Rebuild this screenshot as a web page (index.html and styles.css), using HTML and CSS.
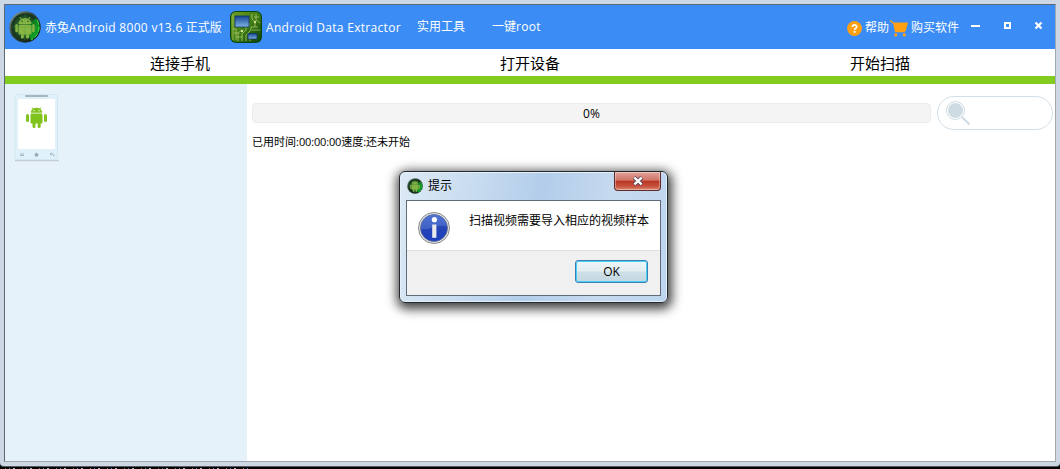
FILE: index.html
```
<!DOCTYPE html>
<html lang="zh-CN">
<head>
    <meta charset="UTF-8">
    <title>赤兔Android 8000</title>
    <link rel="stylesheet" href="styles.css">
</head>
<body>
    <svg width="0" height="0" class="defs">
        <defs>
            <radialGradient id="radar" cx="50%" cy="50%" r="55%">
                <stop offset="0" stop-color="#4b8a35"/>
                <stop offset="0.6" stop-color="#24532a"/>
                <stop offset="1" stop-color="#0d2413"/>
            </radialGradient>
            <linearGradient id="sweep" x1="0" y1="0" x2="1" y2="1">
                <stop offset="0" stop-color="#0c5a14"/>
                <stop offset="1" stop-color="#12b52f"/>
            </linearGradient>
            <linearGradient id="rim" x1="0" y1="0" x2="1" y2="1">
                <stop offset="0" stop-color="#93a79b"/>
                <stop offset="0.4" stop-color="#33463a"/>
                <stop offset="1" stop-color="#0a160d"/>
            </linearGradient>
            <linearGradient id="board" x1="0" y1="0" x2="1" y2="1">
                <stop offset="0" stop-color="#6f9f22"/>
                <stop offset="0.5" stop-color="#3f7d16"/>
                <stop offset="1" stop-color="#0b4208"/>
            </linearGradient>
            <linearGradient id="chip" x1="0" y1="0" x2="0" y2="1">
                <stop offset="0" stop-color="#15448f"/>
                <stop offset="1" stop-color="#7fb4e6"/>
            </linearGradient>
            <linearGradient id="ball" x1="0" y1="0" x2="0" y2="1">
                <stop offset="0" stop-color="#3f62cf"/>
                <stop offset="0.5" stop-color="#2545b4"/>
                <stop offset="1" stop-color="#1c3fc0"/>
            </linearGradient>
            <symbol id="logo" viewBox="0 0 32 32">
                <circle cx="16" cy="16" r="15.7" fill="url(#rim)"/>
                <circle cx="16" cy="16" r="13.8" fill="url(#radar)"/>
                <path d="M16 16 L27 7 A14 14 0 0 1 22 29 Z" fill="url(#sweep)"/>
                <path d="M28 9 A14 14 0 0 1 22 29" fill="none" stroke="#35e04e" stroke-width="1" stroke-dasharray="5 2"/>
                <g fill="#86b744">
                    <path d="M9.5 13 a6.5 6 0 0 1 13 0z"/>
                    <path d="M11 6 l2 3 M21 6 l-2 3" stroke="#86b744" stroke-width="1"/>
                    <rect x="9.5" y="13.7" width="13" height="9.8" rx="1.3"/>
                    <rect x="6.3" y="13.3" width="2.6" height="8" rx="1.2"/>
                    <rect x="23.1" y="13.3" width="2.6" height="8" rx="1.2"/>
                    <rect x="12" y="22" width="2.8" height="5.5" rx="1.2"/>
                    <rect x="17.2" y="22" width="2.8" height="5.5" rx="1.2"/>
                </g>
                <circle cx="13" cy="10.5" r=".7" fill="#1d4a1b"/>
                <circle cx="19" cy="10.5" r=".7" fill="#1d4a1b"/>
                <path d="M3 16H29M16 3V29" stroke="#5c9a40" stroke-width=".6" opacity=".6"/>
                <circle cx="16" cy="16" r="8" fill="none" stroke="#5c9a40" stroke-width=".6" opacity=".6"/>
            </symbol>
        </defs>
    </svg>

    <div class="window">
        <div class="header">
            <svg class="logo" width="32" height="32"><use href="#logo"/></svg>
            <span class="title">赤兔<span class="en">Android 8000 v13.6</span> 正式版</span>
            <svg class="board" width="32" height="32" viewBox="0 0 32 32">
                <rect width="32" height="32" rx="6" fill="#0d4410"/>
                <rect x="1" y="1" width="30" height="30" rx="5" fill="url(#board)"/>
                <path d="M3 18h3v11M8 30v-8l4-3M12 30v-7l4-4v-3M16 30v-6l5-5v-3h7M20 30v-3M22 3v5l3 3v5M26 3v6l4 3M19 12v4M3 3v26" fill="none" stroke="#9dbf5a" stroke-width=".9"/>
                <path d="M4 22h5M6 26h7M24 6h5M22 19h8" stroke="#b5cc78" stroke-width=".7"/>
                <rect x="5" y="5" width="14" height="11" fill="url(#chip)" stroke="#173668" stroke-width=".8"/>
                <rect x="18" y="22.5" width="9" height="5.5" fill="url(#chip)" stroke="#173668" stroke-width=".8"/>
                <circle cx="25" cy="11" r="1.2" fill="#d4e494"/>
                <circle cx="12" cy="20" r="1.2" fill="#d4e494"/>
            </svg>
            <span class="product">Android Data Extractor</span>
            <span class="menu tools">实用工具</span>
            <span class="menu root">一键<span class="en">root</span></span>
            <div class="right">
                <svg width="15" height="15" viewBox="0 0 15 15">
                    <circle cx="7.5" cy="7.5" r="7.4" fill="#fea011"/>
                    <path d="M5.5 5.9c0-2.6 4.2-2.6 4.2-.2c0 1.5-2.1 1.6-2.1 3.3" fill="none" stroke="#fff" stroke-width="1.7"/>
                    <rect x="6.7" y="10" width="1.8" height="1.8" fill="#fff"/>
                </svg>
                <span class="help">帮助</span>
                <svg width="18" height="17" viewBox="0 0 18 17">
                    <path d="M0 .5 L3.8 3.4 L5.6 11.5 H15" fill="none" stroke="#fea011" stroke-width="1.3"/>
                    <path d="M3.5 2.5H18L15.8 11H5.3z" fill="#fea011"/>
                    <circle cx="5.7" cy="14.9" r="1.6" fill="#fea011"/>
                    <circle cx="14.3" cy="14.9" r="1.6" fill="#fea011"/>
                </svg>
                <span class="buy">购买软件</span>
                <svg class="controls" width="72" height="9" viewBox="0 0 72 9">
                    <rect x="0" y="4" width="9" height="2" fill="#fff"/>
                    <rect x="34" y="2" width="5" height="5" fill="none" stroke="#fff" stroke-width="2"/>
                    <path d="M64.5 1.5l6 6M70.5 1.5l-6 6" stroke="#fff" stroke-width="2.2"/>
                </svg>
            </div>
        </div>
        <div class="steps">
            <div>连接手机</div>
            <div>打开设备</div>
            <div>开始扫描</div>
        </div>
        <div class="main">
            <div class="sidebar">
                <svg width="46" height="70" viewBox="0 0 46 70">
                    <path d="M1 66.5h44" stroke="#c3ced4" stroke-width="1.4"/>
                    <rect x="0.5" y="0" width="43.5" height="66" rx="4" fill="#d2e9f4"/>
                    <rect x="1.5" y="1" width="41.5" height="64" rx="3.5" fill="#e0f1f9"/>
                    <rect x="11" y="1" width="23" height="2" rx="1" fill="#a6b4bf"/>
                    <rect x="4" y="5" width="37" height="50" fill="#fff"/>
                    <g fill="#80c31c">
                        <path d="M16.8 18.7a5.7 5 0 0 1 11.4 0z"/>
                        <path d="M18.2 13.5l1.3 2M26.8 13.5l-1.3 2" stroke="#80c31c" stroke-width="1"/>
                        <rect x="16.5" y="19.5" width="12" height="10" rx="1.2"/>
                        <rect x="12" y="20" width="3" height="8" rx="1.5"/>
                        <rect x="30" y="20" width="3" height="8" rx="1.5"/>
                        <rect x="18.5" y="27" width="3" height="7" rx="1.5"/>
                        <rect x="23.7" y="27" width="3" height="7" rx="1.5"/>
                    </g>
                    <circle cx="20" cy="16.7" r=".6" fill="#fff"/>
                    <circle cx="25" cy="16.7" r=".6" fill="#fff"/>
                    <path d="M6 60h4M6 61.5h4" stroke="#a4b6c0" stroke-width="1"/>
                    <path d="M20 61l2.5-2.5L25 61h-1v1.5h-3V61z" fill="#97a9b4"/>
                    <path d="M36 60h3q1 0 1 2.5M37.5 58.5L36 60l1.5 1.5" fill="none" stroke="#a4b6c0" stroke-width="1"/>
                </svg>
            </div>
            <div class="content">
                <div class="bar">
                    <div class="progress">0%</div>
                    <div class="search">
                        <svg width="25" height="25" viewBox="0 0 25 25">
                            <circle cx="9.5" cy="9.5" r="9" fill="none" stroke="#cfdbe2" stroke-width="1"/>
                            <circle cx="9.5" cy="9.5" r="7.5" fill="#cfdbe2"/>
                            <path d="M16 16l7.5 7.5" stroke="#cfdbe2" stroke-width="2"/>
                        </svg>
                    </div>
                </div>
                <p class="status">已用时间:<span class="en">00:00:00</span>速度:还未开始</p>
            </div>
        </div>
    </div>

    <div class="dialog">
        <div class="dialog-title">
            <svg width="16" height="16"><use href="#logo"/></svg>
            <span>提示</span>
            <div class="close">
                <svg width="12" height="10" viewBox="0 0 12 10">
                    <path d="M2.2 1.5l7.6 7M9.8 1.5l-7.6 7" stroke="#55465a" stroke-width="4"/>
                    <path d="M2.4 1.7l7.2 6.6M9.6 1.7l-7.2 6.6" stroke="#fff" stroke-width="2.4"/>
                </svg>
            </div>
        </div>
        <div class="dialog-body">
            <div class="message">
                <svg width="32" height="32" viewBox="0 0 32 32">
                    <circle cx="16" cy="16" r="15.5" fill="#e6e6e8" stroke="#85878c" stroke-width="1"/>
                    <circle cx="16" cy="16" r="13.5" fill="url(#ball)" stroke="#5b6788" stroke-width=".8"/>
                    <path d="M3 17a13 13 0 0 1 26-3q-10-1-14 1q-5 3-12 2z" fill="#6684dc" opacity=".45"/>
                    <circle cx="16.4" cy="7.7" r="2.6" fill="#fff"/>
                    <path d="M14.2 12.5h4.2v13.3h-4.2z" fill="#e9e9ed"/>
                </svg>
                <span>扫描视频需要导入相应的视频样本</span>
            </div>
            <div class="actions">
                <div class="ok">OK</div>
            </div>
        </div>
    </div>
</body>
</html>
```
FILE: styles.css
```
*{
    margin: 0;
    padding: 0;
    box-sizing: border-box;
}
body{
    width: 1060px;
    height: 469px;
    overflow: hidden;
    background: #000;
    font-family: "Open Sans", "Noto Sans CJK SC", sans-serif;
    font-size: 12px;
    color: #000;
}
svg{
    display: block;
    flex: none;
}
.defs{
    position: absolute;
}
.window{
    display: flex;
    flex-direction: column;
    height: 467px;
    padding: 4px 4px 4px;
    background: #ced8e4;
    border-bottom: 1px solid #555b61;
    border-radius: 0 0 4px 4px;
}
/* 窗口下面露出的一条桌面 */
body::after{
    content: "";
    display: block;
    width: 250px;
    height: 1px;
    margin-top: 1px;
    background: repeating-linear-gradient(90deg, #000 0 5px, #8c6a4a 5px 6px, #000 6px 9px, #4a78a8 9px 10px, #000 10px 13px, #b5b5b5 13px 15px, #000 15px 17px);
}
.header{
    display: flex;
    align-items: center;
    height: 45px;
    padding-left: 4px;
    background: #3c8cf5;
    border: 1px solid #5d6875;
    border-bottom: 0;
    border-right-color: #9fa9b5;
    color: #fff;
    line-height: 20px;
    white-space: nowrap;
}
.title{
    width: 178px;
    margin: 1px 7px 0 4px;
}
.title .en{
    letter-spacing: .3px;
}
.product{
    width: 151px;
    margin: 1px 0 0 4px;
    letter-spacing: .3px;
}
.menu{
    width: 75px;
}
.root .en{
    letter-spacing: .3px;
}
.right{
    display: flex;
    align-items: center;
    margin: 2px 12px 0 auto;
}
.help{
    margin: 0 1px 0 3px;
}
.buy{
    margin: 0 12px 0 3px;
}
.controls{
    margin-bottom: 5px;
}
.steps{
    display: flex;
    height: 35px;
    background: #fff;
    border: 1px solid #5d6875;
    border-width: 0 1px;
    border-right-color: #9fa9b5;
    box-shadow: inset 0 -8px #82cc1f;
    font-size: 15px;
    line-height: 28px;
    text-align: center;
}
.steps div{
    flex: 1;
}
.main{
    display: flex;
    flex: 1;
    background: #fff;
    border: 1px solid #5d6875;
    border-top: 0;
    border-right-color: #a3a7ab;
    border-bottom-color: #a3a7ab;
}
.sidebar{
    width: 242px;
    padding: 10px 9px;
    background: #e6f2f9;
}
.content{
    flex: 1;
    padding: 12px 2px 0 5px;
}
.bar{
    display: flex;
    align-items: center;
    gap: 6px;
}
.progress{
    flex: 1;
    height: 20px;
    background: #f4f4f4;
    border: 1px solid #ececec;
    border-radius: 4px;
    line-height: 19px;
    text-align: center;
}
.search{
    width: 116px;
    height: 34px;
    padding: 4px 8px;
    border: 1px solid #d3e0e9;
    border-radius: 17px;
}
.status{
    margin-top: 4px;
    font-size: 11px;
    line-height: 16px;
}
.status .en{
    letter-spacing: -.15px;
}
.dialog{
    position: absolute;
    left: 399px;
    top: 171px;
    width: 269px;
    height: 132px;
    padding: 0 6px 6px;
    background: linear-gradient(100deg, #dce9f5 0%, #c9ddf0 25%, #b3cdea 50%, #c6daef 75%, #bdd5ee 100%);
    border: 1px solid #22282e;
    border-radius: 6px;
    box-shadow: inset 0 0 0 1px #e4f0fa, 1px 3px 11px 3px rgba(0,0,0,.75);
}
.dialog-title{
    display: flex;
    height: 28px;
    line-height: 28px;
}
.dialog-title > svg{
    margin: 6px 5px 0 1px;
}
.close{
    display: flex;
    align-items: center;
    justify-content: center;
    width: 47px;
    height: 19px;
    margin-left: auto;
    background: linear-gradient(#e3a49a 0, #cf7467 46%, #b93423 50%, #c8523f 80%, #dc8b72 100%);
    border: 1px solid #602a2a;
    border-top: 0;
    border-radius: 0 0 4px 4px;
    box-shadow: inset 0 0 0 1px rgba(255,255,255,.35);
}
.dialog-body{
    height: 96px;
    background: #f0f0f0;
    border: 1px solid #5f6c7b;
}
.message{
    display: flex;
    height: 50px;
    padding: 11px 0 0 11px;
    background: #fff;
    border-bottom: 1px solid #dfdfdf;
    white-space: nowrap;
}
.message span{
    margin-left: 19px;
    line-height: 17px;
}
.actions{
    display: flex;
    justify-content: flex-end;
    padding: 9px 12px;
}
.ok{
    width: 73px;
    height: 23px;
    background: linear-gradient(#eef5f9 0, #e3edf2 48%, #d0e0e8 52%, #c2d7e2 100%);
    border: 1px solid #3c7fb1;
    border-radius: 3px;
    box-shadow: inset 0 0 0 1px #48d0f5;
    line-height: 21px;
    text-align: center;
}
```
